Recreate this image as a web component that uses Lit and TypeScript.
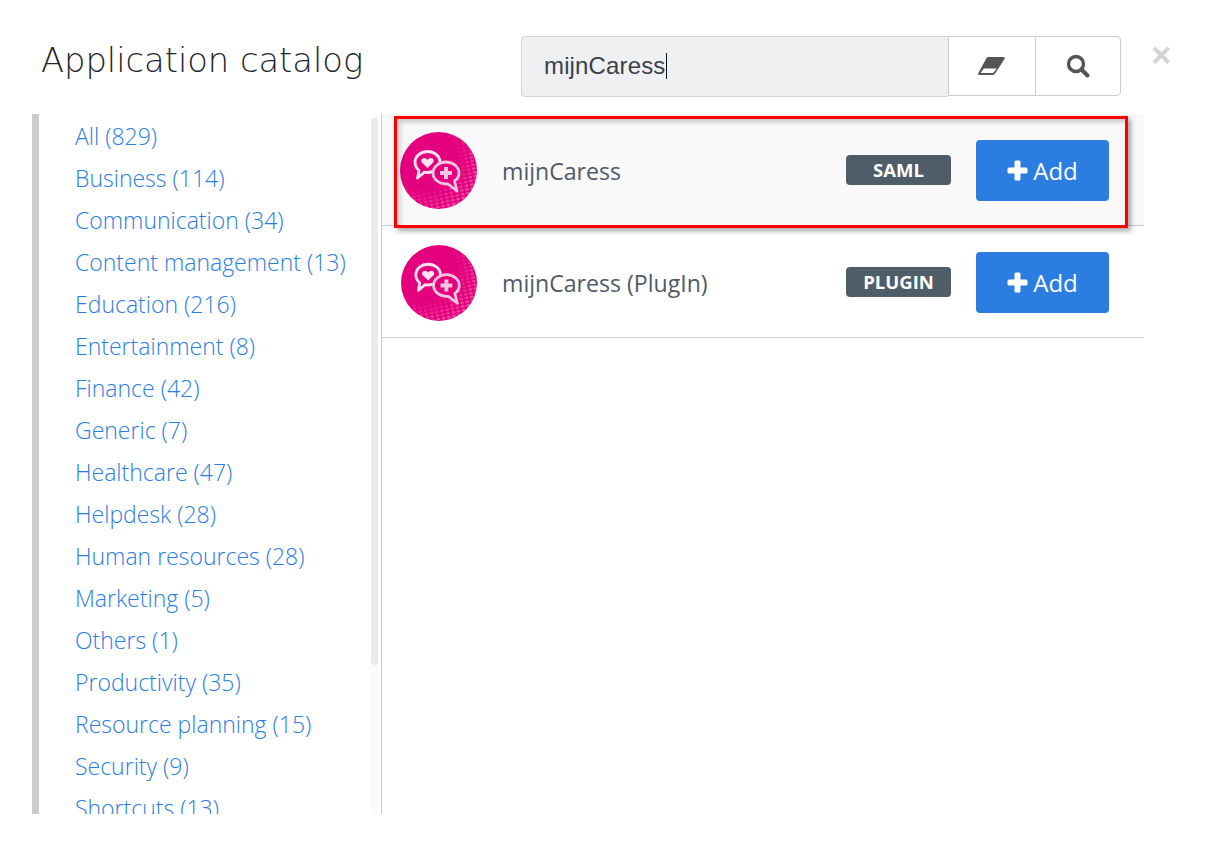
import { LitElement, html, css, svg } from "lit";
import { customElement } from "lit/decorators.js";

const cats = ["All (829)","Business (114)","Communication (34)","Content management (13)","Education (216)","Entertainment (8)","Finance (42)","Generic (7)","Healthcare (47)","Helpdesk (28)","Human resources (28)","Marketing (5)","Others (1)","Productivity (35)","Resource planning (15)","Security (9)","Shortcuts (13)"];
const apps = [{n:"mijnCaress",b:"SAML",sel:true},{n:"mijnCaress (PlugIn)",b:"PLUGIN",sel:false}];

const logo = () => html`<svg class="logo" viewBox="0 0 77 77">
  <defs>
    <pattern id="dots" width="5.400" height="3.800" patternUnits="userSpaceOnUse" patternTransform="rotate(-12 60 60)">
      <ellipse cx="2.700" cy="1.900" rx="2" ry="1.200" fill="#f06cb0"/>
    </pattern>
    <radialGradient id="fade" cx="0.3" cy="0.3" r="0.85">
      <stop offset="0.5" stop-color="#fff" stop-opacity="0"/>
      <stop offset="1" stop-color="#fff" stop-opacity="1"/>
    </radialGradient>
    <mask id="m"><circle cx="38.5" cy="38.5" r="38.5" fill="url(#fade)"/></mask>
  </defs>
  <circle cx="38.5" cy="38.5" r="38.5" fill="#e5007e"/>
  <circle cx="38.5" cy="38.5" r="38.5" fill="url(#dots)" mask="url(#m)"/>
  ${svg`<path d="M15 30a12.500 10.500 0 1 1 12.500 10.500q-1.500 0-3-.3L17.500 46 19 38.500Q15 35 15 30z" fill="#e5007e" stroke="#fde3f0" stroke-width="2.800" stroke-linejoin="round"/>
  <path d="M27.500 36l-5.200-5c-2-2-.6-5 2-5 1.400 0 2.500.8 3.200 1.900.7-1.100 1.800-1.900 3.200-1.900 2.600 0 4 3 2 5z" fill="#fde3f0"/>
  <path d="M33 41a13 11 0 0 1 26 0q0 5-4.500 8L57 59 48 52h-2a13 11 0 0 1-13-11z" fill="#e5007e" stroke="#fbc4df" stroke-width="2.800" stroke-linejoin="round"/>
  <path d="M44 35h4v4h4v4h-4v4h-4v-4h-4v-4h4z" fill="#fbc4df"/>`}
</svg>`;

@customElement("app-root")
export class AppRoot extends LitElement {
  static styles = css`
    :host { display: block; width: 1214px; height: 855px; background: #fff; overflow: hidden; font-family: "Open Sans", sans-serif; }
    .head { display: flex; align-items: flex-start; height: 114px; box-sizing: border-box; padding: 36px 0 0 41px; }
    h1 { margin: 0; width: 480px; font: 200 33.700px/50px "DejaVu Sans", Inter, sans-serif; color: #1f252a; white-space: nowrap; }
    .search { display: flex; width: 600px; height: 61px; }
    .input { width: 428px; box-sizing: border-box; height: 61px; background: #eef0f2; border: 1px solid #d4d6d8; border-right: none; border-radius: 4px 0 0 4px; padding: 0 0 2px 22px; font: 24px/56px "Liberation Sans", sans-serif; color: #3a4148; letter-spacing: 0.150px; display: flex; align-items: center; }
    .caret { width: 1px; height: 26px; background: #111; }
    .btn { height: 60px; box-sizing: border-box; border: 1px solid #ccc; display: flex; align-items: center; justify-content: center; background: #fff; }
    .erase { width: 88px; border-right: none; }
    .find { width: 86px; border-radius: 0 4px 4px 0; }
    .close { margin: 1px 0 0 30px; font: 700 35px/36px "Liberation Sans", sans-serif; color: #d4d4d4; }
    .body { display: flex; height: 700px; margin-left: 32px; width: 1112px; }
    .side { width: 350px; flex: none; display: flex; box-sizing: border-box; border-left: 7px solid #ccc; border-right: 1px solid #ccc; overflow: hidden; }
    .cats { flex: 1; margin: 0; padding: 1px 0 0 36px; list-style: none; overflow: hidden; }
    .cats li { height: 42px; font: 300 23px/42px "Open Sans", sans-serif; color: #2b7de1; white-space: nowrap; }
    .track { width: 7px; flex: none; margin-right: 3px; background: #fafafa; padding-top: 4px; }
    .thumb { height: 547px; background: #e9eaec; border-radius: 4px; }
    .main { flex: 1; position: relative; }
    .row { height: 112px; box-sizing: border-box; border-bottom: 1px solid #ccc; display: flex; align-items: center; padding: 0 35px 0 19px; }
    .row.sel { background: #f9f9f9; padding-left: 18px; }
    .logo { width: 76px; height: 76px; flex: none; margin-top: 3px; }
    .row.sel .logo { width: 77px; height: 77px; margin-top: 2px; }
    .name { flex: 1; margin: 2px 0 0 25px; font: 400 23.100px/32px "Open Sans", sans-serif; color: #4f5b66; }
    .badge { width: 105px; height: 30px; border-radius: 4px; background: #4f5d68; color: #fff; font: 700 18.500px/30px "Open Sans", sans-serif; text-align: center; margin-right: 25px; }
    .add { width: 133px; height: 61px; margin-top: 2px; border-radius: 4px; background: #2c7de1; color: #fff; display: flex; align-items: center; justify-content: center; gap: 5px; font: 400 24px/32px "Open Sans", sans-serif; }
    .mark { position: absolute; left: 12px; top: 2px; width: 734px; height: 112px; box-sizing: border-box; border: 3px solid #f00; box-shadow: 3px 3px 5px rgba(0,0,0,.35), inset 3px 3px 5px rgba(0,0,0,.2); pointer-events: none; }
  `;
  render() {
    return html`
      <div class="head">
        <h1>Application catalog</h1>
        <div class="search">
          <div class="input">mijnCaress<span class="caret"></span></div>
          <div class="btn erase"><svg width="27" height="18" viewBox="0 0 27 18"><path d="M8.500 1A2 2 0 0 1 10 0H25.500a1.200 1.200 0 0 1 1 1.900L17 16.800A2.500 2.500 0 0 1 15 18H1.200A1.100 1.100 0 0 1 .3 16.200z" fill="#555"/><path d="M5.800 11.500H18.800L15 16H2.700z" fill="#fff"/></svg></div>
          <div class="btn find"><svg width="24" height="24" viewBox="0 0 24 24"><circle cx="10" cy="10" r="7.500" fill="none" stroke="#555" stroke-width="3.400"/><path d="M15.500 15.500l6 6" stroke="#555" stroke-width="4" stroke-linecap="round"/></svg></div>
        </div>
        <div class="close">×</div>
      </div>
      <div class="body">
        <div class="side">
          <ul class="cats">${cats.map(c => html`<li>${c}</li>`)}</ul>
          <div class="track"><div class="thumb"></div></div>
        </div>
        <div class="main">
          ${apps.map(a => html`<div class="row ${a.sel ? "sel" : ""}">
            ${logo()}
            <div class="name">${a.n}</div>
            <div class="badge">${a.b}</div>
            <div class="add"><svg width="21" height="21" viewBox="0 0 21 21"><path d="M7.500 2a1.500 1.500 0 0 1 1.500-1.500h3A1.500 1.500 0 0 1 13.500 2v5.500H19a1.500 1.500 0 0 1 1.500 1.500v3a1.500 1.500 0 0 1-1.500 1.500h-5.500V19a1.500 1.500 0 0 1-1.500 1.500H9A1.500 1.500 0 0 1 7.500 19v-5.500H2A1.500 1.500 0 0 1 .5 12V9A1.500 1.500 0 0 1 2 7.500h5.500z" fill="#fff"/></svg><span>Add</span></div>
          </div>`)}
          <div class="mark"></div>
        </div>
      </div>
    `;
  }
}
